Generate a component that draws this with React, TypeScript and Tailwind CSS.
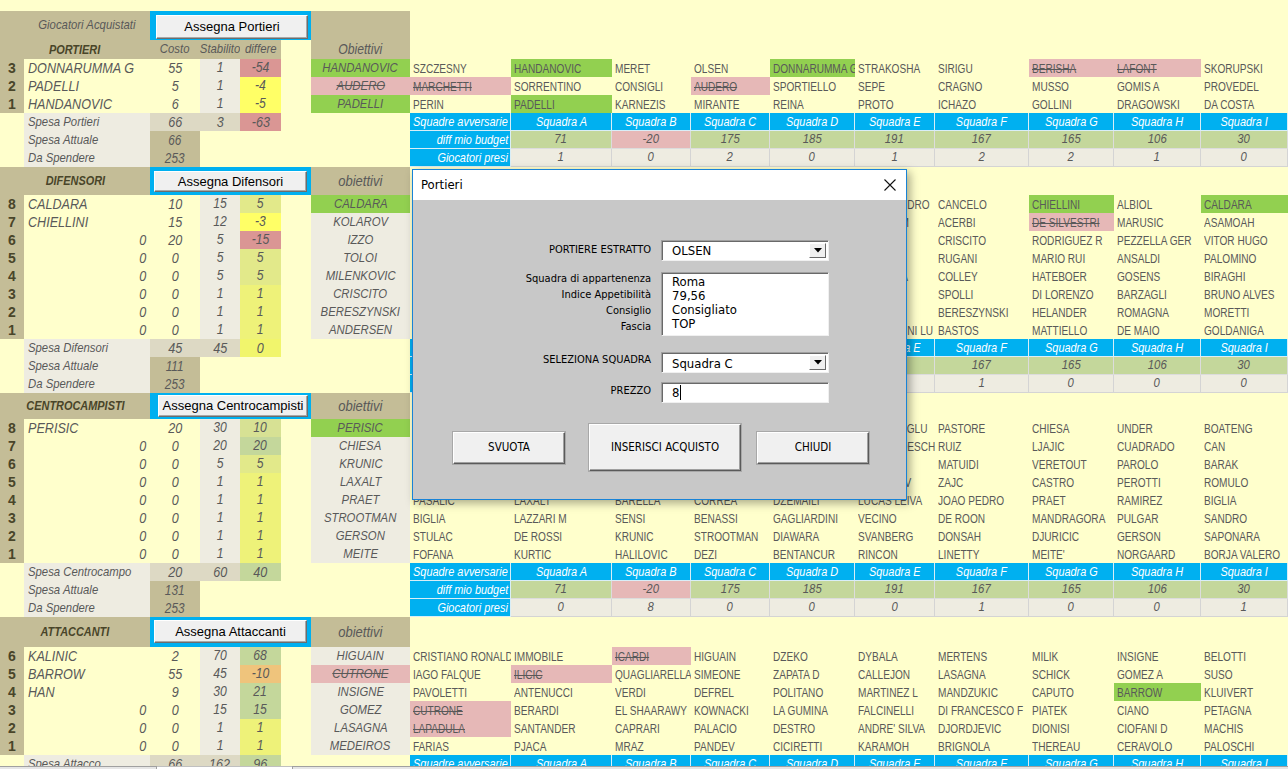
import React from "react";

type Cell = string | [string, "g" | "p"];

const W = ["w-[101px]", "w-[101px]", "w-[79px]", "w-[79px]", "w-[85px]", "w-[80px]", "w-[94px]", "w-[85px]", "w-[87px]", "w-[87px]"];

const RED = "bg-[#da9694]";
const YEL = "bg-[#ffff66]";
const LYG = "bg-[#e2e98a]";
const Y1 = "bg-[#eef279]";
const GR = "bg-[#c4d79b]";
const G10 = "bg-[#d7e194]";
const ORA = "bg-[#efc47c]";

function C({
  w,
  bg = "",
  a = "l",
  cls = "",
  strike = false,
  children,
}: {
  w: string;
  bg?: string;
  a?: "l" | "c" | "r";
  cls?: string;
  strike?: boolean;
  children?: React.ReactNode;
}) {
  const j = a === "l" ? "justify-start" : a === "c" ? "justify-center" : "justify-end";
  const o = a === "l" ? "origin-left" : a === "c" ? "origin-center" : "origin-right";
  return (
    <div className={`${w} shrink-0 flex items-center overflow-hidden ${j} ${bg} ${cls}`}>
      {children !== undefined && (
        <span className={`shrink-0 whitespace-nowrap scale-x-[0.84] ${o} ${strike ? "line-through" : ""}`}>{children}</span>
      )}
    </div>
  );
}

function NameRow({ cells }: { cells: Cell[] }) {
  return (
    <div className="flex h-[18px] w-[878px] text-[12px] text-[#595959] pt-[1px]">
      {cells.map((c, i) => {
        const t = typeof c === "string" ? c : c[0];
        const k = typeof c === "string" ? "" : c[1];
        const bg = k === "g" ? "bg-[#92d050]" : k === "p" ? "bg-[#e6b8b7]" : "";
        return (
          <C key={i} w={W[i]} bg={bg} cls="pl-[3px] -mt-[1px] pt-[1px]" strike={k === "p"}>
            {t}
          </C>
        );
      })}
    </div>
  );
}

const SQ = ["A", "B", "C", "D", "E", "F", "G", "H", "I"];
const BL = "bg-[#00b0f0] border-r border-b border-[#d9eef7] text-white";

function BlueRow() {
  return (
    <div className="flex h-[18px] w-[878px] italic text-[13px]">
      <C w={W[0]} bg={BL} a="r" cls="pr-[2px]">Squadre avversarie</C>
      {SQ.map((s, i) => (
        <C key={s} w={W[i + 1]} bg={BL} a="c">
          Squadra {s}
        </C>
      ))}
    </div>
  );
}

function DiffRow({ v }: { v: number[] }) {
  return (
    <div className="flex h-[18px] w-[878px] italic text-[13.5px]">
      <C w={W[0]} bg={BL} a="r" cls="pr-[2px] text-[13px]">diff mio budget</C>
      {v.map((n, i) => (
        <C key={i} w={W[i + 1]} bg={`${n < 0 ? "bg-[#e6b8b7]" : "bg-[#c4d79b]"} border-r border-b border-[#dcdcdc] text-[#595959]`} a="c">
          {n}
        </C>
      ))}
    </div>
  );
}

function PresiRow({ v }: { v: number[] }) {
  return (
    <div className="flex h-[18px] w-[878px] italic text-[13.5px]">
      <C w={W[0]} bg={BL} a="r" cls="pr-[2px] text-[13px]">Giocatori presi</C>
      {v.map((n, i) => (
        <C key={i} w={W[i + 1]} bg="bg-[#eeece1] border-r border-b border-[#d4d4d4] text-[#595959]" a="c">
          {n}
        </C>
      ))}
    </div>
  );
}

type LRow = {
  n: number;
  name?: string;
  costo: number;
  stab: number;
  diff: number;
  dbg: string;
  obj: string;
  obg: string;
  strike?: boolean;
};

function DataRow({ r, right }: { r: LRow; right: Cell[] }) {
  return (
    <div className="flex h-[18px]">
      <div className="flex w-[410px] shrink-0 italic text-[#595959]">
        <div className="w-[24px] shrink-0 bg-[#c4bd97] flex items-center justify-center not-italic font-bold text-[14px] text-[#494529]">{r.n}</div>
        {r.name ? (
          <C w="w-[126px]" bg="bg-[#ffffcc]" cls="pl-[4px] text-[15px]">{r.name}</C>
        ) : (
          <C w="w-[126px]" bg="bg-[#ffffcc]" a="r" cls="pr-[4px] text-[15px]">0</C>
        )}
        <C w="w-[50px]" bg="bg-[#ffffcc]" a="c" cls="text-[15px]">{r.costo}</C>
        <C w="w-[40px]" bg="bg-[#eeece1]" a="c" cls="text-[14.5px]">{r.stab}</C>
        <C w="w-[41px]" bg={r.dbg} a="c" cls="text-[14.5px]">{r.diff}</C>
        <div className="w-[30px] shrink-0 bg-[#ffffcc]" />
        <C w="w-[99px]" bg={r.obg} a="c" cls="text-[13.5px]" strike={r.strike}>{r.obj}</C>
      </div>
      <NameRow cells={right} />
    </div>
  );
}

function SpesaRows({
  label,
  costo,
  stab,
  diff,
  dbg,
  attuale,
  diffs,
  presi,
}: {
  label: string;
  costo: number;
  stab: number;
  diff: number;
  dbg: string;
  attuale: number;
  diffs: number[];
  presi: number[];
}) {
  const lab = "pl-[4px] text-[13.5px]";
  return (
    <>
      <div className="flex h-[18px]">
        <div className="flex w-[410px] shrink-0 italic text-[#595959]">
          <div className="w-[24px] shrink-0" />
          <C w="w-[126px]" bg="bg-[#eeece1]" cls={lab}>{label}</C>
          <C w="w-[50px]" bg="bg-[#ddd9c4]" a="c" cls="text-[15px]">{costo}</C>
          <C w="w-[40px]" bg="bg-[#ddd9c4]" a="c" cls="text-[15px]">{stab}</C>
          <C w="w-[41px]" bg={dbg} a="c" cls="text-[15px]">{diff}</C>
        </div>
        <BlueRow />
      </div>
      <div className="flex h-[18px]">
        <div className="flex w-[410px] shrink-0 italic text-[#595959]">
          <div className="w-[24px] shrink-0" />
          <C w="w-[126px]" bg="bg-[#eeece1]" cls={lab}>Spesa Attuale</C>
          <C w="w-[50px]" bg="bg-[#c4bd97]" a="c" cls="text-[14px]">{attuale}</C>
        </div>
        <DiffRow v={diffs} />
      </div>
      <div className="flex h-[18px]">
        <div className="flex w-[410px] shrink-0 italic text-[#595959]">
          <div className="w-[24px] shrink-0" />
          <C w="w-[126px]" bg="bg-[#eeece1]" cls={lab}>Da Spendere</C>
          <C w="w-[50px]" bg="bg-[#c4bd97]" a="c" cls="text-[14px]">253</C>
        </div>
        <PresiRow v={presi} />
      </div>
    </>
  );
}

function XButton({ label }: { label: string }) {
  return (
    <div className="flex-1 flex items-center justify-center bg-[#f0f0f0] border border-t-[#ffffff] border-l-[#ffffff] border-r-[#6d6d6d] border-b-[#6d6d6d] shadow-[inset_-1px_-1px_0_#a8a8a8] text-[13px] text-black whitespace-nowrap overflow-hidden">
      {label}
    </div>
  );
}

function SecHeader({ title, btn, h, pad }: { title: string; btn: string; h: string; pad: string }) {
  return (
    <div className={`flex ${h}`}>
      <C w="w-[150px]" bg="bg-[#c4bd97]" a="c" cls="font-bold italic text-[13px] text-[#494529]">{title}</C>
      <div className={`w-[161px] shrink-0 bg-[#00b0f0] flex ${pad}`}>
        <XButton label={btn} />
      </div>
      <C w="w-[99px]" bg="bg-[#c4bd97]" a="c" cls="italic text-[15.5px] text-[#595959]">obiettivi</C>
    </div>
  );
}

const DIFFS = [71, -20, 175, 185, 191, 167, 165, 106, 30];

const portL: LRow[] = [
  { n: 3, name: "DONNARUMMA G", costo: 55, stab: 1, diff: -54, dbg: RED, obj: "HANDANOVIC", obg: "bg-[#92d050]" },
  { n: 2, name: "PADELLI", costo: 5, stab: 1, diff: -4, dbg: YEL, obj: "AUDERO", obg: "bg-[#e6b8b7]", strike: true },
  { n: 1, name: "HANDANOVIC", costo: 6, stab: 1, diff: -5, dbg: YEL, obj: "PADELLI", obg: "bg-[#92d050]" },
];
const portR: Cell[][] = [
  ["SZCZESNY", ["HANDANOVIC", "g"], "MERET", "OLSEN", ["DONNARUMMA G", "g"], "STRAKOSHA", "SIRIGU", ["BERISHA", "p"], ["LAFONT", "p"], "SKORUPSKI"],
  [["MARCHETTI", "p"], "SORRENTINO", "CONSIGLI", ["AUDERO", "p"], "SPORTIELLO", "SEPE", "CRAGNO", "MUSSO", "GOMIS A", "PROVEDEL"],
  ["PERIN", ["PADELLI", "g"], "KARNEZIS", "MIRANTE", "REINA", "PROTO", "ICHAZO", "GOLLINI", "DRAGOWSKI", "DA COSTA"],
];

const OB = "bg-[#eeece1]";
const defL: LRow[] = [
  { n: 8, name: "CALDARA", costo: 10, stab: 15, diff: 5, dbg: LYG, obj: "CALDARA", obg: "bg-[#92d050]" },
  { n: 7, name: "CHIELLINI", costo: 15, stab: 12, diff: -3, dbg: YEL, obj: "KOLAROV", obg: OB },
  { n: 6, costo: 20, stab: 5, diff: -15, dbg: RED, obj: "IZZO", obg: OB },
  { n: 5, costo: 0, stab: 5, diff: 5, dbg: LYG, obj: "TOLOI", obg: OB },
  { n: 4, costo: 0, stab: 5, diff: 5, dbg: LYG, obj: "MILENKOVIC", obg: OB },
  { n: 3, costo: 0, stab: 1, diff: 1, dbg: Y1, obj: "CRISCITO", obg: OB },
  { n: 2, costo: 0, stab: 1, diff: 1, dbg: Y1, obj: "BERESZYNSKI", obg: OB },
  { n: 1, costo: 0, stab: 1, diff: 1, dbg: Y1, obj: "ANDERSEN", obg: OB },
];
const defR: Cell[][] = [
  ["KOULIBALY", "SKRINIAR", "DE SCIGLIO", "LAZZARI", "SPINAZZOLA", "ALEX SANDRO", "CANCELO", ["CHIELLINI", "g"], "ALBIOL", ["CALDARA", "g"]],
  ["DE VRIJ", "KOLAROV", "MAKSIMOVIC", "CASTAGNE", "MASIELLO", "GHOULAM", "ACERBI", ["DE SILVESTRI", "p"], "MARUSIC", "ASAMOAH"],
  ["MANOLAS", "IZZO", "BONUCCI", "PISACANE", "BREMER", "BANI", "CRISCITO", "RODRIGUEZ R", "PEZZELLA GER", "VITOR HUGO"],
  ["FAZIO", "TOLOI", "CACERES", "CEPPITELLI", "MURRU", "LUPERTO", "RUGANI", "MARIO RUI", "ANSALDI", "PALOMINO"],
  ["HYSAJ", "MILENKOVIC", "MANCINI G", "LIROLA", "FERRARI", "CALABRIA", "COLLEY", "HATEBOER", "GOSENS", "BIRAGHI"],
  ["ROMAGNOLI", "ANDERSEN", "DJIMSITI", "TONELLI", "PELUSO", "MARLON", "SPOLLI", "DI LORENZO", "BARZAGLI", "BRUNO ALVES"],
  ["MUSACCHIO", "FLORENZI", "VRSALJKO", "SOUMAORO", "SALA", "VENUTI", "BERESZYNSKI", "HELANDER", "ROMAGNA", "MORETTI"],
  ["ZAPPACOSTA", "MASINA", "RADU", "BONIFAZI", "CALABRESI", "PELLEGRINI LU", "BASTOS", "MATTIELLO", "DE MAIO", "GOLDANIGA"],
];

const cenL: LRow[] = [
  { n: 8, name: "PERISIC", costo: 20, stab: 30, diff: 10, dbg: G10, obj: "PERISIC", obg: "bg-[#92d050]" },
  { n: 7, costo: 0, stab: 20, diff: 20, dbg: GR, obj: "CHIESA", obg: OB },
  { n: 6, costo: 0, stab: 5, diff: 5, dbg: LYG, obj: "KRUNIC", obg: OB },
  { n: 5, costo: 0, stab: 1, diff: 1, dbg: Y1, obj: "LAXALT", obg: OB },
  { n: 4, costo: 0, stab: 1, diff: 1, dbg: Y1, obj: "PRAET", obg: OB },
  { n: 3, costo: 0, stab: 1, diff: 1, dbg: Y1, obj: "STROOTMAN", obg: OB },
  { n: 2, costo: 0, stab: 1, diff: 1, dbg: Y1, obj: "GERSON", obg: OB },
  { n: 1, costo: 0, stab: 1, diff: 1, dbg: Y1, obj: "MEITE", obg: OB },
];
const cenR: Cell[][] = [
  ["PJANIC", ["PERISIC", "g"], "HAMSIK", "PELLEGRINI L", "MILINKOVIC", "CALHANOGLU", "PASTORE", "CHIESA", "UNDER", "BOATENG"],
  ["ALLAN", "ZIELINSKI", "BROZOVIC", "JANKTO", "NAINGGOLAN", "BERNARDESCHI", "RUIZ", "LJAJIC", "CUADRADO", "CAN"],
  ["KESSIE", "LUIS ALBERTO", "BADELJ", "DE PAUL", "KHEDIRA", "ROG", "MATUIDI", "VERETOUT", "PAROLO", "BARAK"],
  ["PAREDES", "BONAVENTURA", "CIGARINI", "CRISTANTE", "VALOTI", "BERISHA V", "ZAJC", "CASTRO", "PEROTTI", "ROMULO"],
  ["PASALIC", "LAXALT", "BARELLA", "CORREA", "DZEMAILI", "LUCAS LEIVA", "JOAO PEDRO", "PRAET", "RAMIREZ", "BIGLIA"],
  ["BIGLIA", "LAZZARI M", "SENSI", "BENASSI", "GAGLIARDINI", "VECINO", "DE ROON", "MANDRAGORA", "PULGAR", "SANDRO"],
  ["STULAC", "DE ROSSI", "KRUNIC", "STROOTMAN", "DIAWARA", "SVANBERG", "DONSAH", "DJURICIC", "GERSON", "SAPONARA"],
  ["FOFANA", "KURTIC", "HALILOVIC", "DEZI", "BENTANCUR", "RINCON", "LINETTY", "MEITE'", "NORGAARD", "BORJA VALERO"],
];

const attL: LRow[] = [
  { n: 6, name: "KALINIC", costo: 2, stab: 70, diff: 68, dbg: GR, obj: "HIGUAIN", obg: OB },
  { n: 5, name: "BARROW", costo: 55, stab: 45, diff: -10, dbg: ORA, obj: "CUTRONE", obg: "bg-[#e6b8b7]", strike: true },
  { n: 4, name: "HAN", costo: 9, stab: 30, diff: 21, dbg: GR, obj: "INSIGNE", obg: OB },
  { n: 3, costo: 0, stab: 15, diff: 15, dbg: GR, obj: "GOMEZ", obg: OB },
  { n: 2, costo: 0, stab: 1, diff: 1, dbg: Y1, obj: "LASAGNA", obg: OB },
  { n: 1, costo: 0, stab: 1, diff: 1, dbg: Y1, obj: "MEDEIROS", obg: OB },
];
const attR: Cell[][] = [
  ["CRISTIANO RONALDO", "IMMOBILE", ["ICARDI", "p"], "HIGUAIN", "DZEKO", "DYBALA", "MERTENS", "MILIK", "INSIGNE", "BELOTTI"],
  ["IAGO FALQUE", ["ILICIC", "p"], "QUAGLIARELLA", "SIMEONE", "ZAPATA D", "CALLEJON", "LASAGNA", "SCHICK", "GOMEZ A", "SUSO"],
  ["PAVOLETTI", "ANTENUCCI", "VERDI", "DEFREL", "POLITANO", "MARTINEZ L", "MANDZUKIC", "CAPUTO", ["BARROW", "g"], "KLUIVERT"],
  [["CUTRONE", "p"], "BERARDI", "EL SHAARAWY", "KOWNACKI", "LA GUMINA", "FALCINELLI", "DI FRANCESCO F", "PIATEK", "CIANO", "PETAGNA"],
  [["LAPADULA", "p"], "SANTANDER", "CAPRARI", "PALACIO", "DESTRO", "ANDRE' SILVA", "DJORDJEVIC", "DIONISI", "CIOFANI D", "MACHIS"],
  ["FARIAS", "PJACA", "MRAZ", "PANDEV", "CICIRETTI", "KARAMOH", "BRIGNOLA", "THEREAU", "CERAVOLO", "PALOSCHI"],
];

const DLG = "font-['DejaVu_Sans_Condensed','DejaVu_Sans',sans-serif]";

function Sunken({ children, h }: { children: React.ReactNode; h: string }) {
  return (
    <div className={`w-[168px] ${h} bg-white border border-t-[#a0a0a0] border-l-[#a0a0a0] border-r-[#f0f0f0] border-b-[#f0f0f0] shadow-[inset_1px_1px_0_#696969] flex`}>
      {children}
    </div>
  );
}

function Arrow() {
  return (
    <div className="w-[17px] my-[2px] mr-[2px] bg-[#f0f0f0] border border-t-white border-l-white border-r-[#696969] border-b-[#696969] flex items-center justify-center">
      <svg width="8" height="5" viewBox="0 0 8 5">
        <path d="M0 0H8L4 4.5Z" fill="#000" />
      </svg>
    </div>
  );
}

function DlgButton({ label, w, h }: { label: string; w: string; h: string }) {
  return (
    <div className={`${w} ${h} shrink-0 bg-[#f0f0f0] border border-t-[#ffffff] border-l-[#ffffff] border-r-[#5a5a5a] border-b-[#5a5a5a] shadow-[inset_-1px_-1px_0_#a0a0a0,0_0_0_1px_#a8a8a8] flex items-center justify-center text-[11.5px] text-black`}>
      {label}
    </div>
  );
}

function Dialog() {
  return (
    <div className={`absolute left-[412px] top-[169px] w-[495px] h-[331px] border border-[#1883d7] bg-[#c8c8c8] shadow-[3px_3px_9px_rgba(0,0,0,0.35)] flex flex-col ${DLG}`}>
      <div className="h-[30px] shrink-0 bg-white flex items-center justify-between pl-[8px] pr-[10px]">
        <span className="text-[13px] text-black">Portieri</span>
        <svg width="12" height="12" viewBox="0 0 12 12">
          <path d="M0.5 0.5L11.5 11.5M11.5 0.5L0.5 11.5" stroke="#111" strokeWidth="1.1" />
        </svg>
      </div>
      <div className="flex flex-col pt-[40px] text-black">
        <div className="flex items-center gap-[10px]">
          <div className="w-[238px] text-right text-[11px]">PORTIERE ESTRATTO</div>
          <Sunken h="h-[21px]">
            <div className="flex-1 pl-[10px] text-[13px] leading-[19px]">OLSEN</div>
            <Arrow />
          </Sunken>
        </div>
        <div className="flex items-start gap-[10px] mt-[11px]">
          <div className="w-[238px] text-right text-[11px] leading-[16px] -mt-[1px]">
            <div>Squadra di appartenenza</div>
            <div>Indice Appetibilità</div>
            <div>Consiglio</div>
            <div>Fascia</div>
          </div>
          <Sunken h="h-[64px]">
            <div className="pl-[10px] pt-[2px] text-[13px] leading-[14px]">
              <div>Roma</div>
              <div>79,56</div>
              <div>Consigliato</div>
              <div>TOP</div>
            </div>
          </Sunken>
        </div>
        <div className="flex items-center gap-[10px] mt-[16px]">
          <div className="w-[238px] text-right text-[11px] -mt-[5px]">SELEZIONA SQUADRA</div>
          <Sunken h="h-[21px]">
            <div className="flex-1 pl-[10px] text-[13px] leading-[21px]">Squadra C</div>
            <Arrow />
          </Sunken>
        </div>
        <div className="flex items-center gap-[10px] mt-[9px]">
          <div className="w-[238px] text-right text-[11px] -mt-[2px]">PREZZO</div>
          <Sunken h="h-[21px]">
            <div className="flex items-center pl-[10px] text-[13px] leading-[21px]">
              8<span className="inline-block w-[1px] h-[15px] bg-black ml-[1px]" />
            </div>
          </Sunken>
        </div>
        <div className="flex items-center mt-[21px] pl-[40px]">
          <DlgButton label="SVUOTA" w="w-[112px]" h="h-[32px]" />
          <div className="w-[24px]" />
          <DlgButton label="INSERISCI ACQUISTO" w="w-[152px]" h="h-[47px]" />
          <div className="w-[16px]" />
          <DlgButton label="CHIUDI" w="w-[112px]" h="h-[32px]" />
        </div>
      </div>
    </div>
  );
}

export default function App() {
  return (
    <div className="relative w-[1288px] h-[769px] overflow-hidden bg-[#ffffcc] font-['Liberation_Sans',Arial,sans-serif]">
      <div className="h-[766px] overflow-hidden">
        <div className="h-[11px]" />
        <div className="flex h-[29px]">
          <C w="w-[150px]" bg="bg-[#c4bd97]" a="c" cls="pl-[24px] italic text-[13.5px] text-[#595959]">Giocatori Acquistati</C>
          <div className="w-[161px] shrink-0 bg-[#00b0f0] flex pl-[6px] pr-[3px] pt-[4px] pb-[1px]">
            <XButton label="Assegna Portieri" />
          </div>
          <div className="w-[99px] shrink-0 bg-[#c4bd97]" />
        </div>
        <div className="flex h-[19px] italic text-[#595959]">
          <C w="w-[150px]" bg="bg-[#c4bd97]" a="c" cls="font-bold text-[13px] text-[#494529]">PORTIERI</C>
          <C w="w-[50px]" bg="bg-[#c4bd97]" a="c" cls="text-[13.5px]">Costo</C>
          <C w="w-[40px]" bg="bg-[#c4bd97]" a="c" cls="text-[13.5px]">Stabilito</C>
          <C w="w-[41px]" bg="bg-[#c4bd97]" a="c" cls="text-[13.5px]">differe</C>
          <div className="w-[30px] shrink-0" />
          <C w="w-[99px]" bg="bg-[#c4bd97]" a="c" cls="text-[14.5px]">Obiettivi</C>
        </div>
        {portL.map((r, i) => (
          <DataRow key={i} r={r} right={portR[i]} />
        ))}
        <SpesaRows label="Spesa Portieri" costo={66} stab={3} diff={-63} dbg={RED} attuale={66} diffs={DIFFS} presi={[1, 0, 2, 0, 1, 2, 2, 1, 0]} />

        <SecHeader title="DIFENSORI" btn="Assegna Difensori" h="h-[28px]" pad="pl-[4px] pr-[4px] pt-[4px] pb-[3px]" />
        {defL.map((r, i) => (
          <DataRow key={i} r={r} right={defR[i]} />
        ))}
        <SpesaRows label="Spesa Difensori" costo={45} stab={45} diff={0} dbg="bg-[#f1f56c]" attuale={111} diffs={DIFFS} presi={[1, 0, 8, 0, 0, 1, 0, 0, 0]} />

        <SecHeader title="CENTROCAMPISTI" btn="Assegna Centrocampisti" h="h-[26px]" pad="pl-[8px] pr-[3px] pt-[2px] pb-[2px]" />
        {cenL.map((r, i) => (
          <DataRow key={i} r={r} right={cenR[i]} />
        ))}
        <SpesaRows label="Spesa Centrocampo" costo={20} stab={60} diff={40} dbg={GR} attuale={131} diffs={DIFFS} presi={[0, 8, 0, 0, 0, 1, 0, 0, 1]} />

        <SecHeader title="ATTACCANTI" btn="Assegna Attaccanti" h="h-[30px]" pad="pl-[4px] pr-[4px] pt-[3px] pb-[4px]" />
        {attL.map((r, i) => (
          <DataRow key={i} r={r} right={attR[i]} />
        ))}
        <div className="flex h-[18px]">
          <div className="flex w-[410px] shrink-0 italic text-[#595959]">
            <div className="w-[24px] shrink-0" />
            <C w="w-[126px]" bg="bg-[#eeece1]" cls="pl-[4px] text-[13.5px]">Spesa Attacco</C>
            <C w="w-[50px]" bg="bg-[#ddd9c4]" a="c" cls="text-[15px]">66</C>
            <C w="w-[40px]" bg="bg-[#ddd9c4]" a="c" cls="text-[15px]">162</C>
            <C w="w-[41px]" bg={GR} a="c" cls="text-[15px]">96</C>
          </div>
          <BlueRow />
        </div>
      </div>
      <div className="flex h-[3px]">
        <div className="w-[157px] bg-[#e6e6e6] border-t border-r border-[#a0a0a0]" />
        <div className="w-[135px] bg-white border-t border-[#c0c0c0]" />
        <div className="flex-1 bg-[#e6e6e6] border-t border-l border-[#a0a0a0]" />
      </div>
      <Dialog />
    </div>
  );
}
